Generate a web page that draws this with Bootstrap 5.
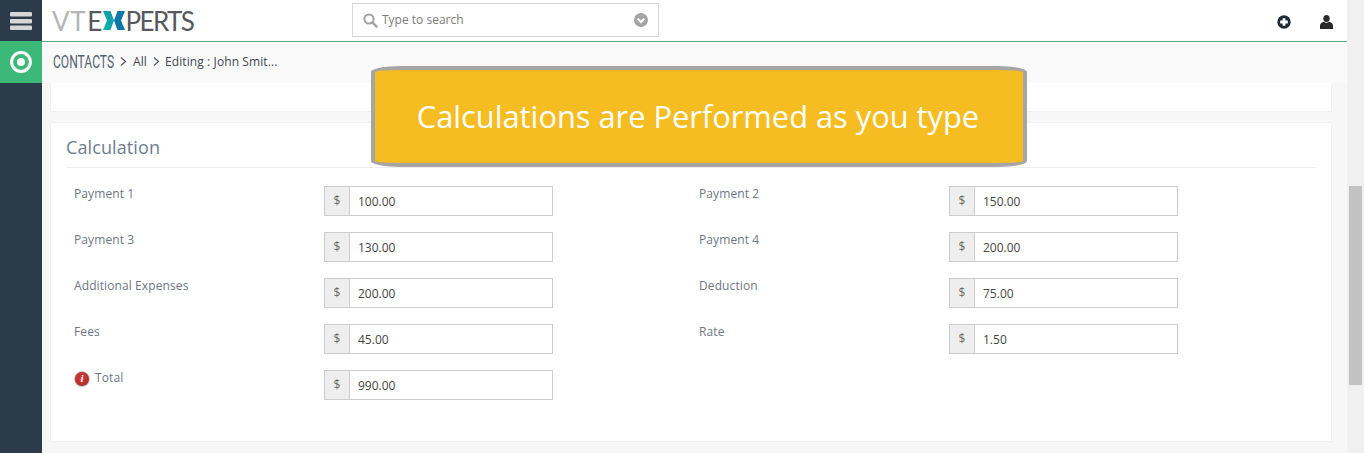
<!DOCTYPE html>
<html lang="en">
<head>
<meta charset="utf-8">
<title>Contacts</title>
<link rel="stylesheet" href="https://cdn.jsdelivr.net/npm/bootstrap@5.3.0/dist/css/bootstrap.min.css">
<style>
html,body{height:100%;overflow:hidden}
body{font-family:"Open Sans",sans-serif;font-size:12px;background:#f7f7f7;color:#6b7480}
.app-shell{height:453px;overflow:hidden}
.side-rail{width:42px;background:#2c3b4a;flex:none}
.rail-menu{height:41px}
.rail-module{height:42px;background:#3cb878}
.main-pane{flex:1 1 auto;min-width:0;position:relative}
.scroll-track{width:17px;background:#f0f0f0;flex:none;padding:186px 2px 0}
.scroll-thumb{height:199px;background:#c2c2c2}
.top-strip{height:42px;background:#fff;border-bottom:1px solid #5fa883;padding-left:10px}
.brand-mark{font-family:"Lato",sans-serif;font-size:26px;font-weight:400;line-height:1;letter-spacing:-1.6px;color:#55595e;width:140px;height:22px;flex:none}
.brand-mark .pale{color:#b5b5b5;margin-right:1px;letter-spacing:.6px}
.brand-mark svg{margin:0 1px 0 2px;flex:none}
.search-shell{position:relative;width:307px;height:34px;border:1px solid #d8d8d8;margin:-1px 0 0 160px;padding:0 10px;background:#fff}
.search-input{border:0;outline:0;flex:1;min-width:0;font-size:12px;color:#7c7c7c;padding:0;background:transparent;font-family:"Open Sans",sans-serif}
.search-input::placeholder{color:#7c7c7c;opacity:1}
.top-tools{margin-left:auto;padding:3px 14px 0 0;gap:29px}
.crumb-bar{height:41px;background:#fafafa;padding:0 0 2px 11px;color:#3e4650;letter-spacing:.1px}
.crumb-module{font-family:"Roboto",sans-serif;font-size:19px;color:#566273;line-height:1;display:inline-block;transform:scaleX(.635);transform-origin:left;width:61px;flex:none;white-space:nowrap;letter-spacing:0}
.crumb-sep{width:7px;height:9px;margin:0 6px;flex:none}
.crumb-sep:nth-of-type(2){margin-right:5px}
.panel-top{height:29px;margin:0 15px 10px 8px;background:#fff;border:1px solid #f0f0f0;border-top:0}
.panel-main{height:320px;margin:0 15px 0 8px;background:#fff;border:1px solid #f0f0f0;padding:0 15px}
.panel-title{font-size:18px;font-weight:400;color:#6d7d8f;height:45px;margin:0 0 18px;padding:9px 0 0;line-height:30px;letter-spacing:.1px;border-bottom:1px solid #eee}
.field-row{height:46px;margin:0}
.field-cell{width:625px;padding:0}
.field-label{width:258px;padding-left:8px;line-height:16px;color:#6e7783;flex:none;letter-spacing:.1px}
.money-group{width:229px;height:30px;flex-wrap:nowrap}
.money-group .input-group-text{width:26px;height:30px;justify-content:center;padding:0;font-size:12px;background:#eee;border-color:#ccc;border-radius:0;color:#6a6a60}
.money-group .form-control{height:30px;min-height:0;padding:0 8px;font-size:12px;border-color:#ccc;border-radius:0;color:#444;font-family:"Open Sans",sans-serif;box-shadow:none}
.alert-dot{display:inline-flex;width:16px;height:16px;border-radius:50%;background:radial-gradient(circle at 50% 40%,#d23b38,#a92825);border:1px solid #c4c4c4;color:#fff;font:italic 700 11px/1 "Liberation Serif",serif;align-items:center;justify-content:center;margin-right:5px;vertical-align:-2px;position:relative;top:-2px}
.callout{position:absolute;left:329px;top:66px;width:656px;height:101px;background:#f5bd21;border:4px solid #a5a5a5;border-radius:30px/6px;color:#fff;font-family:"Open Sans",sans-serif;font-size:30.8px;line-height:1;padding-right:2px;z-index:5}
</style>
</head>
<body>
<div class="app-shell d-flex">
  <aside class="side-rail d-flex flex-column">
    <div class="rail-menu d-flex align-items-center justify-content-center">
      <svg width="22" height="18" viewBox="0 0 22 18"><g fill="#d4d6d8"><rect width="22" height="4.500" rx="1"/><rect y="7" width="22" height="4.500" rx="1"/><rect y="13.600" width="22" height="4.400" rx="1"/></g></svg>
    </div>
    <div class="rail-module d-flex align-items-center justify-content-center">
      <svg width="22" height="22" viewBox="0 0 22 22"><circle cx="11" cy="11" r="9.400" fill="none" stroke="#fff" stroke-width="3"/><circle cx="11" cy="11" r="4" fill="#fff"/></svg>
    </div>
  </aside>
  <main class="main-pane">
    <header class="top-strip d-flex align-items-center">
      <div class="brand-mark d-flex align-items-center">
        <span class="pale">VT</span><span>E</span>
        <svg width="22" height="19" viewBox="0 0 22 19"><defs><linearGradient id="tealX" x1="0" y1="1" x2="1" y2="0"><stop offset="0" stop-color="#14b5a8"/><stop offset="1" stop-color="#0c98b0"/></linearGradient></defs><polygon points="0,0 7.500,0 11,9.500 7.500,19 0,19 4,9.500" fill="url(#tealX)"/><polygon points="22,0 14.500,0 11,9.500 14.500,19 22,19 18,9.500" fill="#0b77ab"/></svg>
        <span>PERTS</span>
      </div>
      <div class="search-shell d-flex align-items-center">
        <svg class="me-1" width="15" height="15" viewBox="0 0 15 15"><circle cx="6" cy="6" r="4.600" fill="none" stroke="#a2a2a2" stroke-width="2"/><line x1="9.500" y1="9.500" x2="13.600" y2="13.600" stroke="#a2a2a2" stroke-width="2.400" stroke-linecap="round"/></svg>
        <input class="search-input" type="text" placeholder="Type to search">
        <svg width="14" height="14" viewBox="0 0 14 14"><circle cx="7" cy="7" r="7" fill="#a5a5a5"/><polyline points="3.600,5.600 7,9 10.400,5.600" fill="none" stroke="#fff" stroke-width="2"/></svg>
      </div>
      <div class="top-tools d-flex align-items-center">
        <svg width="14" height="14" viewBox="0 0 14 14"><circle cx="7" cy="7" r="6.700" fill="#1f2a35"/><path d="M5.600 3.200h2.800v2.400h2.400v2.800H8.400v2.400H5.600V8.400H3.200V5.600h2.400z" fill="#fff"/></svg>
        <svg width="13" height="14" viewBox="0 0 13 14"><ellipse cx="6.500" cy="3.500" rx="3.200" ry="3.500" fill="#2b2b2b"/><path d="M0 14V10.500C0 8.500 2 7.500 3.800 6.800C5.300 8 7.700 8 9.200 6.800C11 7.500 13 8.500 13 10.500V14Z" fill="#2b2b2b"/></svg>
      </div>
    </header>
    <nav class="crumb-bar d-flex align-items-center" aria-label="breadcrumb">
      <span class="crumb-module">CONTACTS</span>
      <svg class="crumb-sep" viewBox="0 0 7 9"><polyline points="1,.5 5.500,4.500 1,8.500" fill="none" stroke="#4a5560" stroke-width="1.200"/></svg>
      <span>All</span>
      <svg class="crumb-sep" viewBox="0 0 7 9"><polyline points="1,.5 5.500,4.500 1,8.500" fill="none" stroke="#4a5560" stroke-width="1.200"/></svg>
      <span>Editing : John Smit...</span>
    </nav>
    <div class="panel-top"></div>
    <section class="panel-main">
      <h2 class="panel-title">Calculation</h2>
      <div class="row field-row">
        <div class="field-cell d-flex"><label class="field-label">Payment 1</label><div class="input-group money-group"><span class="input-group-text">$</span><input class="form-control" value="100.00"></div></div>
        <div class="field-cell d-flex"><label class="field-label">Payment 2</label><div class="input-group money-group"><span class="input-group-text">$</span><input class="form-control" value="150.00"></div></div>
      </div>
      <div class="row field-row">
        <div class="field-cell d-flex"><label class="field-label">Payment 3</label><div class="input-group money-group"><span class="input-group-text">$</span><input class="form-control" value="130.00"></div></div>
        <div class="field-cell d-flex"><label class="field-label">Payment 4</label><div class="input-group money-group"><span class="input-group-text">$</span><input class="form-control" value="200.00"></div></div>
      </div>
      <div class="row field-row">
        <div class="field-cell d-flex"><label class="field-label">Additional Expenses</label><div class="input-group money-group"><span class="input-group-text">$</span><input class="form-control" value="200.00"></div></div>
        <div class="field-cell d-flex"><label class="field-label">Deduction</label><div class="input-group money-group"><span class="input-group-text">$</span><input class="form-control" value="75.00"></div></div>
      </div>
      <div class="row field-row">
        <div class="field-cell d-flex"><label class="field-label">Fees</label><div class="input-group money-group"><span class="input-group-text">$</span><input class="form-control" value="45.00"></div></div>
        <div class="field-cell d-flex"><label class="field-label">Rate</label><div class="input-group money-group"><span class="input-group-text">$</span><input class="form-control" value="1.50"></div></div>
      </div>
      <div class="row field-row">
        <div class="field-cell d-flex"><label class="field-label"><span class="alert-dot">i</span>Total</label><div class="input-group money-group"><span class="input-group-text">$</span><input class="form-control" value="990.00"></div></div>
      </div>
    </section>
    <div class="callout d-flex align-items-center justify-content-center">Calculations are Performed as you type</div>
  </main>
  <div class="scroll-track"><div class="scroll-thumb"></div></div>
</div>
<script src="https://cdn.jsdelivr.net/npm/bootstrap@5.3.0/dist/js/bootstrap.bundle.min.js"></script>
</body>
</html>
